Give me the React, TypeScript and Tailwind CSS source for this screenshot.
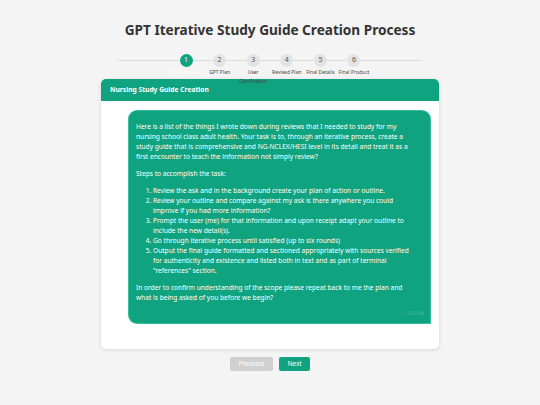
import React from "react";

const steps = [
  "Initial Request",
  "GPT Plan",
  "User Clarification",
  "Revised Plan",
  "Final Details",
  "Final Product",
];

export default function App() {
  return (
    <div
      className="w-[540px] h-[405px] bg-[#f4f4f4] flex flex-col items-center overflow-hidden"
      style={{ fontFamily: '"Noto Sans", "Open Sans", sans-serif' }}
    >
      <h1 className="mt-[19px] text-[13.6px] leading-[22px] font-bold text-[#333]">
        GPT Iterative Study Guide Creation Process
      </h1>
      <div className="relative mt-[12.5px] w-[304px] h-[25.5px]">
        <div className="absolute left-0 right-0 top-[6px] h-[1px] bg-[#dcdcdc]" />
        <div className="relative flex justify-center">
          {steps.map((s, i) => (
            <div key={s} className="w-[33.6px] flex flex-col items-center">
              <div
                className={
                  i === 0
                    ? "w-[13px] h-[13px] rounded-full bg-[#10a37f] text-white text-[7px] flex items-center justify-center"
                    : "w-[13px] h-[13px] rounded-full bg-[#e3e3e3] text-[#555] text-[7px] flex items-center justify-center"
                }
              >
                {i + 1}
              </div>
              <div
                className={
                  i === 0
                    ? "mt-[1.5px] text-[5px] leading-[8.5px] text-center text-white w-[34px] shrink-0"
                    : "mt-[1.5px] text-[5px] leading-[8.5px] text-center text-[#444] w-[34px] shrink-0"
                }
              >
                {s}
              </div>
            </div>
          ))}
        </div>
      </div>
      <div className="w-[338px] bg-white rounded-[5px] shadow-[0_1px_4px_rgba(0,0,0,0.12)] overflow-hidden">
        <div className="h-[22px] bg-[#10a37f] flex items-center px-[9px]">
          <span className="text-white font-bold text-[6.7px]">Nursing Study Guide Creation</span>
        </div>
        <div className="pt-[9px] pb-[25px] pr-[8px] flex justify-end">
          <div className="relative w-[303px] bg-[#10a37f] text-white rounded-t-[9px] rounded-bl-[9px] border border-[#7fe3c6]/40 pl-[7px] pr-[14px] pt-[11px] pb-[20px] text-[6.6px] leading-[10px]">
            <p>
              Here is a list of the things I wrote down during reviews that I needed to study for my
              nursing school class adult health. Your task is to, through an iterative process, create a
              study guide that is comprehensive and NG-NCLEX/HESI level in its detail and treat it as a
              first encounter to teach the information not simply review?
            </p>
            <p className="mt-[7px]">Steps to accomplish the task:</p>
            <ol className="mt-[7px] list-decimal pl-[17px]">
              <li>Review the ask and in the background create your plan of action or outline.</li>
              <li>
                Review your outline and compare against my ask is there anywhere you could improve if you
                had more information?
              </li>
              <li>
                Prompt the user (me) for that information and upon receipt adapt your outline to include
                the new detail(s).
              </li>
              <li>Go through iterative process until satisfied (up to six rounds)</li>
              <li>
                Output the final guide formatted and sectioned appropriately with sources verified for
                authenticity and existence and listed both in text and as part of terminal "references"
                section.
              </li>
            </ol>
            <p className="mt-[7px]">
              In order to confirm understanding of the scope please repeat back to me the plan and what is
              being asked of you before we begin?
            </p>
            <span className="absolute right-[6px] bottom-[5px] text-[4.5px] text-white/25">11:42 AM</span>
          </div>
        </div>
      </div>
      <div className="mt-[8px] flex gap-[6px]">
        <button
          className="w-[43px] h-[14px] rounded-[2px] bg-[#d0d0d0] text-white text-[6.6px]"
          style={{ fontFamily: '"Liberation Sans", Arial, sans-serif' }}
        >
          Previous
        </button>
        <button
          className="w-[31px] h-[14px] rounded-[2px] bg-[#10a37f] text-white text-[6.6px]"
          style={{ fontFamily: '"Liberation Sans", Arial, sans-serif' }}
        >
          Next
        </button>
      </div>
    </div>
  );
}
